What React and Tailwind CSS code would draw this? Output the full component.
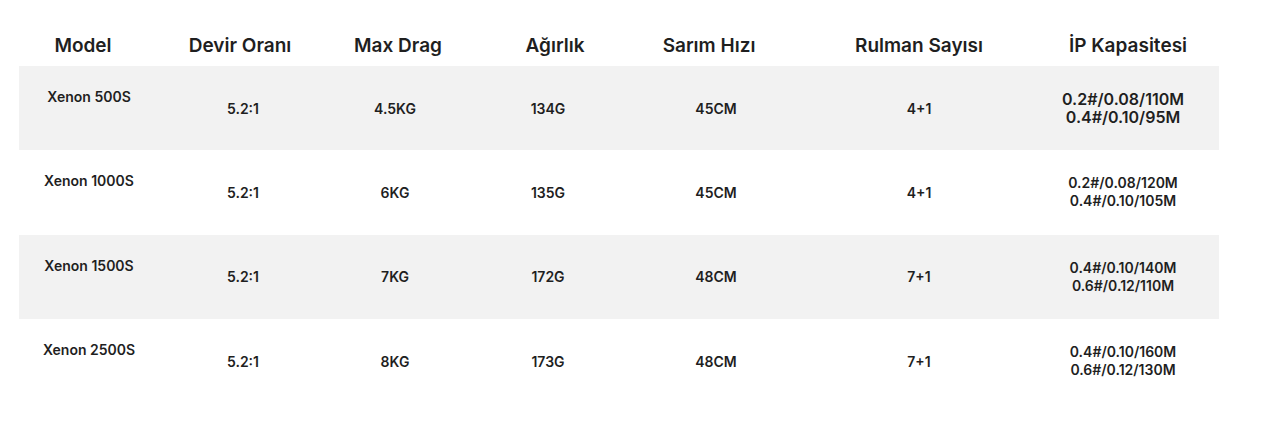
import React from 'react'

const rows = [
    { model: "Xenon 500S", ratio: "5.2:1", drag: "4.5KG", weight: "134G", speed: "45CM", bearing: "4+1", ip: ["0.2#/0.08/110M", "0.4#/0.10/95M"], big: true },
    { model: "Xenon 1000S", ratio: "5.2:1", drag: "6KG", weight: "135G", speed: "45CM", bearing: "4+1", ip: ["0.2#/0.08/120M", "0.4#/0.10/105M"] },
    { model: "Xenon 1500S", ratio: "5.2:1", drag: "7KG", weight: "172G", speed: "48CM", bearing: "7+1", ip: ["0.4#/0.10/140M", "0.6#/0.12/110M"] },
    { model: "Xenon 2500S", ratio: "5.2:1", drag: "8KG", weight: "173G", speed: "48CM", bearing: "7+1", ip: ["0.4#/0.10/160M", "0.6#/0.12/130M"] },
];

const headers = ["Model", "Devir Oranı", "Max Drag", "Ağırlık", "Sarım Hızı", "Rulman Sayısı", "İP Kapasitesi"];

function App() {
    return (
        <div className="min-h-[429px] bg-white pl-[19px] text-[#1f1f1f]" style={{ fontFamily: "Inter, 'Noto Sans', sans-serif" }}>
            {/* header row */}
            <div className="grid h-[66px] grid-cols-[128px_186px_130px_184px_124px_296px_122px] pt-[26px]">
                {headers.map((h) => (
                    <div key={h} className="flex items-center justify-center text-[19px] font-semibold">
                        {h}
                    </div>
                ))}
            </div>

            <div className="w-[1200px]">
                {rows.map((r, i) => (
                    <div
                        key={r.model}
                        className={`grid h-[84.33px] grid-cols-[140px_168px_136px_170px_166px_240px_180px] text-[14px] font-semibold ${i % 2 === 0 ? "bg-[#f2f2f2]" : "bg-white"}`}
                    >
                        <div className="flex justify-center pt-[21px] leading-[20px]">{r.model}</div>
                        <div className="flex items-center justify-center">{r.ratio}</div>
                        <div className="flex items-center justify-center">{r.drag}</div>
                        <div className="flex items-center justify-center">{r.weight}</div>
                        <div className="flex items-center justify-center">{r.speed}</div>
                        <div className="flex items-center justify-center">{r.bearing}</div>
                        <div className={`flex flex-col items-center justify-center pr-[12px] ${r.big ? "text-[16px] leading-[18px]" : "leading-[18px]"}`}>
                            <span>{r.ip[0]}</span>
                            <span>{r.ip[1]}</span>
                        </div>
                    </div>
                ))}
            </div>
        </div>
    );
}

export default App
